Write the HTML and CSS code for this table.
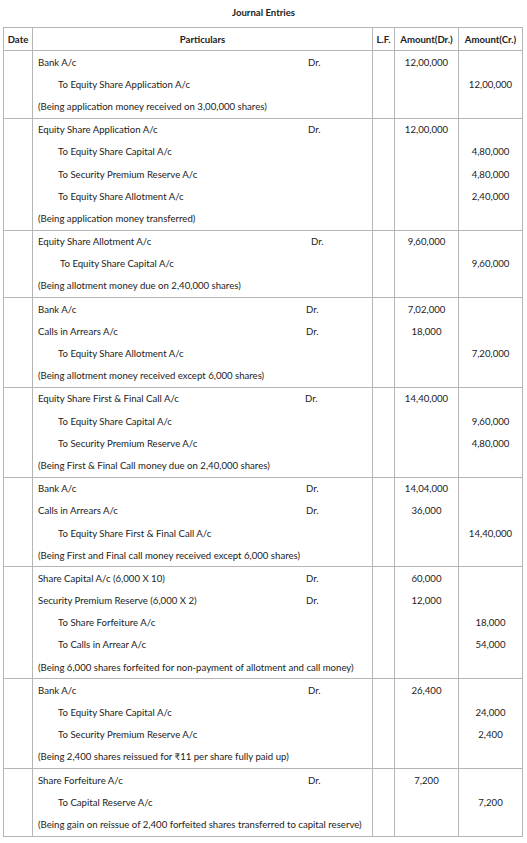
FILE: index.html
```html
<!DOCTYPE html>
<html>
<head>
<meta charset="utf-8">
<link rel="stylesheet" href="styles.css">
</head>
<body>
<div class="page">
  <div class="title">Journal Entries</div>
  <table class="journal">
    <colgroup>
      <col class="c-date"><col class="c-part"><col class="c-lf"><col class="c-dr"><col class="c-cr">
    </colgroup>
    <thead>
      <tr><th>Date</th><th>Particulars</th><th>L.F.</th><th>Amount(Dr.)</th><th>Amount(Cr.)</th></tr>
    </thead>
    <tbody>
      <tr><td></td><td><span class="acct">Bank A/c</span>Dr.</td><td></td><td class="amt">12,00,000</td><td class="amt"></td></tr>
      <tr><td></td><td class="to">To Equity Share Application A/c</td><td></td><td class="amt"></td><td class="amt">12,00,000</td></tr>
      <tr><td></td><td>(Being application money received on 3,00,000 shares)</td><td></td><td></td><td></td></tr>
    </tbody>
    <tbody>
      <tr><td></td><td><span class="acct">Equity Share Application A/c</span>Dr.</td><td></td><td class="amt">12,00,000</td><td class="amt"></td></tr>
      <tr><td></td><td class="to">To Equity Share Capital A/c</td><td></td><td></td><td class="amt">4,80,000</td></tr>
      <tr><td></td><td class="to">To Security Premium Reserve A/c</td><td></td><td></td><td class="amt">4,80,000</td></tr>
      <tr><td></td><td class="to">To Equity Share Allotment A/c</td><td></td><td></td><td class="amt">2,40,000</td></tr>
      <tr><td></td><td>(Being application money transferred)</td><td></td><td></td><td></td></tr>
    </tbody>
    <tbody>
      <tr><td></td><td><span class="acct acct-wide">Equity Share Allotment A/c</span>Dr.</td><td></td><td class="amt">9,60,000</td><td class="amt"></td></tr>
      <tr><td></td><td class="to to-wide">To Equity Share Capital A/c</td><td></td><td></td><td class="amt">9,60,000</td></tr>
      <tr><td></td><td>(Being allotment money due on 2,40,000 shares)</td><td></td><td></td><td></td></tr>
    </tbody>
    <tbody>
      <tr><td></td><td><span class="acct acct-narrow1">Bank A/c</span>Dr.</td><td></td><td class="amt">7,02,000</td><td class="amt"></td></tr>
      <tr><td></td><td><span class="acct acct-narrow1">Calls in Arrears A/c</span>Dr.</td><td></td><td class="amt">18,000</td><td class="amt"></td></tr>
      <tr><td></td><td class="to">To Equity Share Allotment A/c</td><td></td><td></td><td class="amt">7,20,000</td></tr>
      <tr><td></td><td>(Being allotment money received except 6,000 shares)</td><td></td><td></td><td></td></tr>
    </tbody>
    <tbody>
      <tr><td></td><td><span class="acct acct-narrow3">Equity Share First &amp; Final Call A/c</span>Dr.</td><td></td><td class="amt">14,40,000</td><td class="amt"></td></tr>
      <tr><td></td><td class="to">To Equity Share Capital A/c</td><td></td><td></td><td class="amt">9,60,000</td></tr>
      <tr><td></td><td class="to">To Security Premium Reserve A/c</td><td></td><td></td><td class="amt">4,80,000</td></tr>
      <tr><td></td><td>(Being First &amp; Final Call money due on 2,40,000 shares)</td><td></td><td></td><td></td></tr>
    </tbody>
    <tbody>
      <tr><td></td><td><span class="acct acct-narrow1">Bank A/c</span>Dr.</td><td></td><td class="amt">14,04,000</td><td class="amt"></td></tr>
      <tr><td></td><td><span class="acct acct-narrow1">Calls in Arrears A/c</span>Dr.</td><td></td><td class="amt">36,000</td><td class="amt"></td></tr>
      <tr><td></td><td class="to">To Equity Share First &amp; Final Call A/c</td><td></td><td></td><td class="amt">14,40,000</td></tr>
      <tr><td></td><td>(Being First and Final call money received except 6,000 shares)</td><td></td><td></td><td></td></tr>
    </tbody>
    <tbody>
      <tr><td></td><td><span class="acct acct-narrow1">Share Capital A/c (6,000 X 10)</span>Dr.</td><td></td><td class="amt">60,000</td><td class="amt"></td></tr>
      <tr><td></td><td><span class="acct acct-narrow1">Security Premium Reserve (6,000 X 2)</span>Dr.</td><td></td><td class="amt">12,000</td><td class="amt"></td></tr>
      <tr><td></td><td class="to">To Share Forfeiture A/c</td><td></td><td></td><td class="amt">18,000</td></tr>
      <tr><td></td><td class="to">To Calls in Arrear A/c</td><td></td><td></td><td class="amt">54,000</td></tr>
      <tr><td></td><td>(Being 6,000 shares forfeited for non-payment of allotment and call money)</td><td></td><td></td><td></td></tr>
    </tbody>
    <tbody>
      <tr><td></td><td><span class="acct">Bank A/c</span>Dr.</td><td></td><td class="amt">26,400</td><td class="amt"></td></tr>
      <tr><td></td><td class="to">To Equity Share Capital A/c</td><td></td><td></td><td class="amt">24,000</td></tr>
      <tr><td></td><td class="to">To Security Premium Reserve A/c</td><td></td><td></td><td class="amt">2,400</td></tr>
      <tr><td></td><td>(Being 2,400 shares reissued for ₹11 per share fully paid up)</td><td></td><td></td><td></td></tr>
    </tbody>
    <tbody>
      <tr><td></td><td><span class="acct">Share Forfeiture A/c</span>Dr.</td><td></td><td class="amt">7,200</td><td class="amt"></td></tr>
      <tr><td></td><td class="to">To Capital Reserve A/c</td><td></td><td></td><td class="amt">7,200</td></tr>
      <tr><td></td><td>(Being gain on reissue of 2,400 forfeited shares transferred to capital reserve)</td><td></td><td></td><td></td></tr>
    </tbody>
  </table>
</div>
</body>
</html>
```

FILE: styles.css
```css
html, body {
  margin: 0;
  padding: 0;
  background: #fff;
}

.page {
  padding: 0 3px;
  font-family: Lato, "Liberation Sans", sans-serif;
  font-size: 9.6px;
  color: #222;
}

.title {
  height: 27px;
  line-height: 26px;
  text-align: center;
  font-weight: bold;
}

.journal {
  width: 519px;
  border-collapse: collapse;
  table-layout: fixed;
}

.c-date { width: 29px; }
.c-part { width: 340px; }
.c-lf { width: 22px; }
.c-dr { width: 64px; }
.c-cr { width: 64px; }

.journal th {
  height: 22px;
  padding: 0;
  border: 1px solid #b5b5b5;
  font-weight: bold;
  text-align: center;
  background: #fff;
}

.journal tbody {
  border: 1px solid #b5b5b5;
}

.journal td {
  height: 22.2px;
  padding: 0 0 0 5px;
  border-left: 1px solid #b5b5b5;
  border-right: 1px solid #b5b5b5;
  white-space: nowrap;
  vertical-align: middle;
}

.journal td.amt {
  padding: 0;
  text-align: center;
}

.journal td.to {
  padding-left: 25px;
}

.journal td.to-wide {
  padding-left: 27px;
}

.acct {
  display: inline-block;
  width: 270px;
}

.acct-wide { width: 273px; }
.acct-narrow1 { width: 268px; }
.acct-narrow3 { width: 267px; }
```
